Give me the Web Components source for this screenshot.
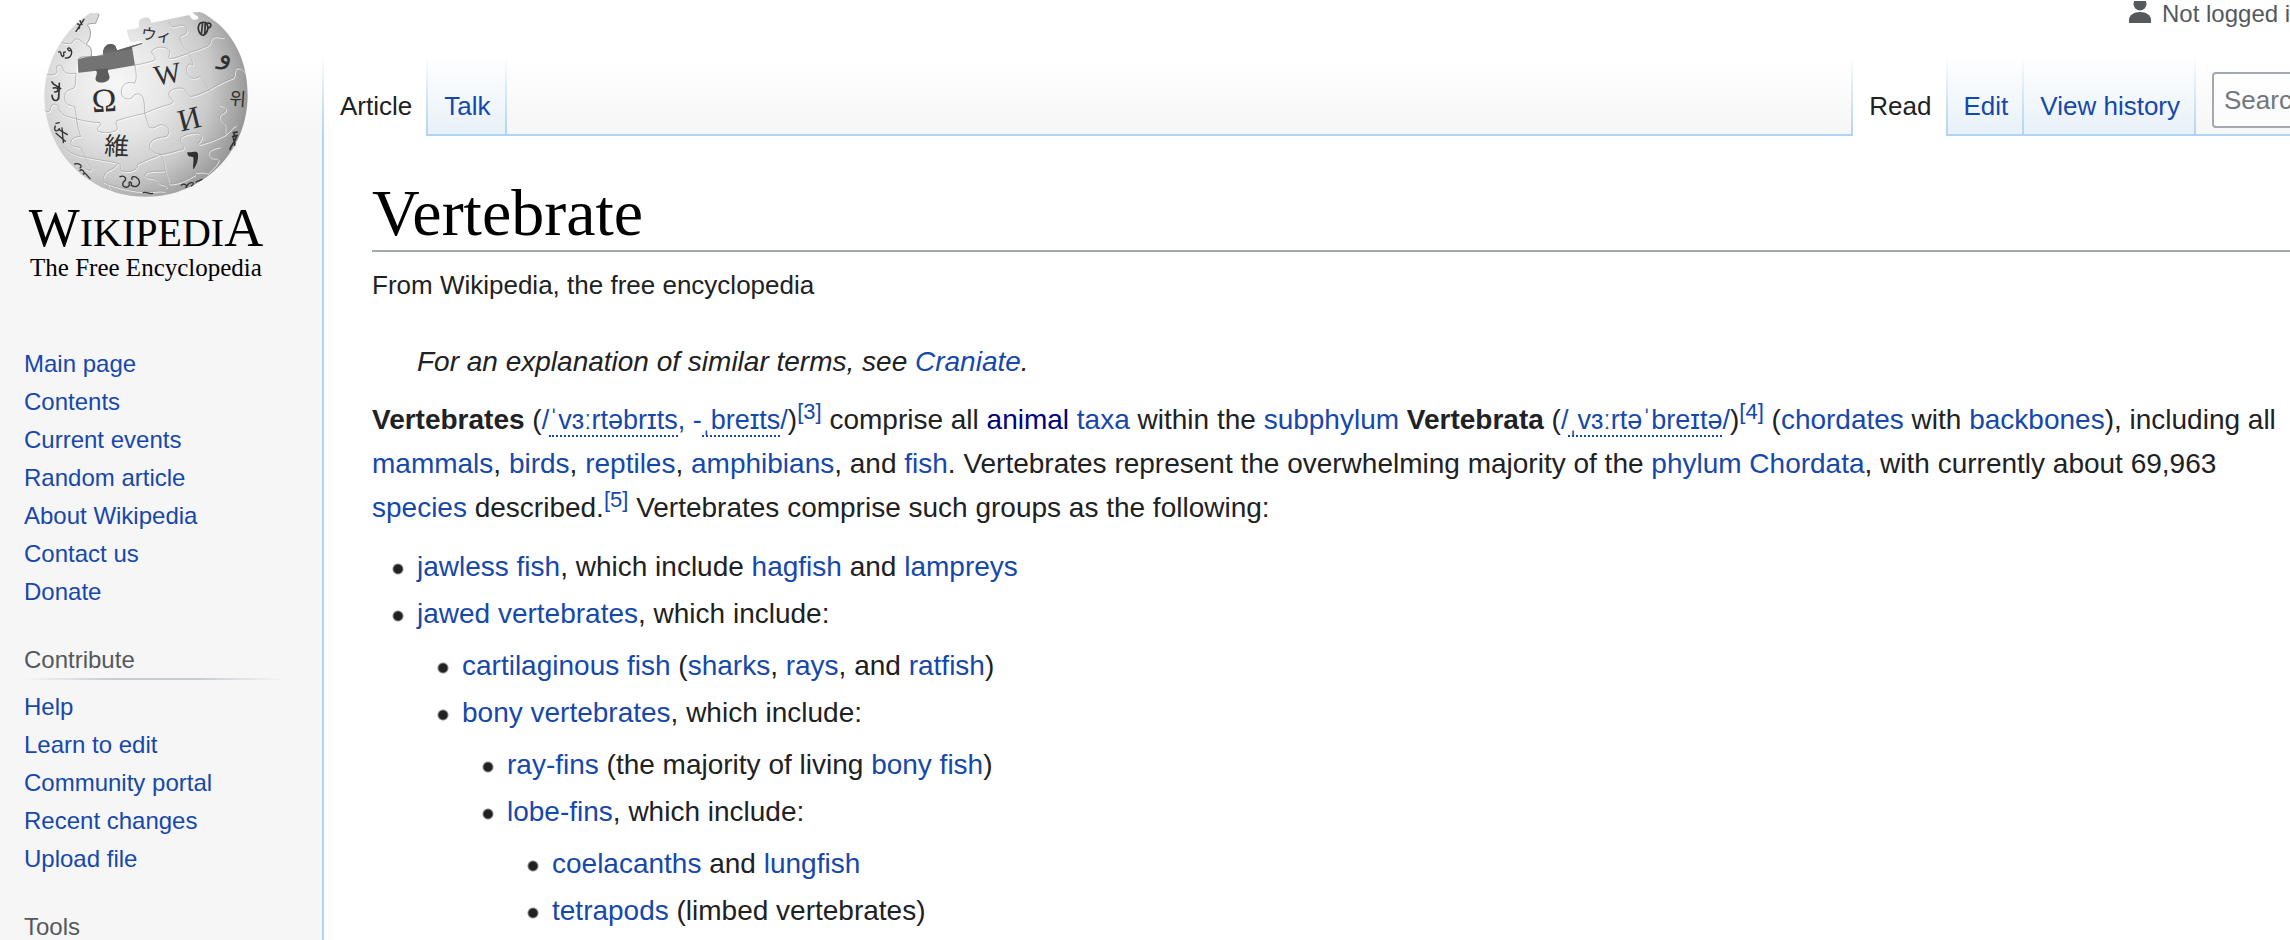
<!DOCTYPE html>
<html lang="en">
<head>
<meta charset="utf-8">
<title>Vertebrate - Wikipedia</title>
<style>
  html { --link: #1648ab; --line: #afd4f3; --muted: #54595d; }
  body {
    margin: 0;
    color: #202122;
    background: #f6f6f6;
    font-family: "Liberation Sans", Arial, sans-serif;
    overflow-x: hidden;
  }
</style>
</head>
<body>
<wiki-page>
  <wiki-sidebar slot="side">
    <wiki-logo></wiki-logo>
    <wiki-portal items="Main page|Contents|Current events|Random article|About Wikipedia|Contact us|Donate"></wiki-portal>
    <wiki-portal heading="Contribute" items="Help|Learn to edit|Community portal|Recent changes|Upload file"></wiki-portal>
    <wiki-portal heading="Tools" items=""></wiki-portal>
  </wiki-sidebar>
  <wiki-header slot="head"></wiki-header>
  <wiki-article heading="Vertebrate"></wiki-article>
</wiki-page>

<script>
class ShadowElement extends HTMLElement {
  constructor() {
    super();
    this.attachShadow({ mode: 'open' });
  }
  connectedCallback() {
    this.shadowRoot.innerHTML = this.render();
  }
}

customElements.define('wiki-page', class extends ShadowElement {
  render() {
    return `<style>
      :host {
        display: grid;
        grid-template-columns: 322px minmax(0, 1fr);
        min-height: 100vh;
        max-height: 100vh;
        overflow: hidden;
        background: linear-gradient(#fff 56px, #f6f6f6 136px);
      }
      main { display: flex; flex-direction: column; min-width: 0; }
    </style>
    <slot name="side"></slot>
    <main><slot name="head"></slot><slot></slot></main>`;
  }
});

customElements.define('wiki-sidebar', class extends ShadowElement {
  render() {
    return `<style>
      :host { display: flex; flex-direction: column; gap: 31px; min-width: 0; }
    </style><slot></slot>`;
  }
});

customElements.define('wiki-portal', class extends ShadowElement {
  render() {
    const heading = this.getAttribute('heading');
    const items = this.getAttribute('items').split('|').filter(Boolean);
    return `<style>
      :host { display: block; padding: 0 36px 0 24px; font-size: 24px; }
      h3 {
        margin: 0 0 8px;
        padding-bottom: 2px;
        font-size: 24px;
        font-weight: normal;
        line-height: 36px;
        color: var(--muted);
        background: linear-gradient(to right, rgba(200,204,209,0), #c8ccd1 33%, #c8ccd1 66%, rgba(200,204,209,0)) bottom / 100% 2px no-repeat;
      }
      ul { list-style: none; margin: 0; padding: 0; }
      li { line-height: 38px; }
      a { color: var(--link); text-decoration: none; }
      a:hover { text-decoration: underline; }
    </style>
    <nav>${heading ? `<h3>${heading}</h3>` : ''}
    <ul>${items.map(t => `<li><a href="#">${t}</a></li>`).join('')}</ul></nav>`;
  }
});

customElements.define('wiki-logo', class extends ShadowElement {
  render() {
    return `<style>
      :host { display: block; height: 314px; }
      a {
        display: flex;
        flex-direction: column;
        align-items: center;
        width: 292px;
        color: #000;
        text-decoration: none;
        font-family: "Liberation Serif", "Times New Roman", serif;
        white-space: nowrap;
      }
      svg { display: block; width: 292px; height: 200px; }
      .word { font-size: 54px; line-height: 56px; height: 54px; }
      .word span { font-size: 40px; }
      .tag { font-size: 25px; line-height: 28px; }
    </style>
    <a href="#">
      <svg viewBox="0 0 876 600" aria-hidden="true">
        <defs>
          <radialGradient id="ball" gradientUnits="userSpaceOnUse" cx="350" cy="250" r="430">
            <stop offset="0" stop-color="#f7f7f7"/>
            <stop offset=".35" stop-color="#e6e6e6"/>
            <stop offset=".65" stop-color="#cbcbcb"/>
            <stop offset=".9" stop-color="#9c9c9c"/>
            <stop offset="1" stop-color="#858585"/>
          </radialGradient>
          <linearGradient id="hole" x1="0" y1="0" x2="0" y2="1">
            <stop offset="0" stop-color="#555"/>
            <stop offset="1" stop-color="#777"/>
          </linearGradient>
          <g id="seams">
            <path d="M140 224 C158 226 176 224 170 208 C166 194 184 190 188 204 C192 222 208 222 228 220"/>
            <path d="M228 220 C226 240 228 256 222 264 C204 272 192 272 194 296 C196 318 216 316 224 320 C228 334 228 346 230 357"/>
            <path d="M134 330 C142 340 152 334 152 322 C156 308 174 310 176 322 C178 344 206 352 230 357"/>
            <path d="M230 357 C256 364 282 368 300 368 C308 378 286 382 294 392 C306 402 340 398 350 390 C356 380 344 372 350 362 C380 352 408 346 434 340"/>
            <path d="M405 195 C408 220 412 236 404 250 C392 246 368 244 364 272 C362 296 382 300 396 294 C404 276 424 278 430 296 C434 312 434 326 434 340"/>
            <path d="M405 195 C428 192 446 186 462 182 C476 172 446 160 458 150 C474 138 498 138 508 152 C514 164 500 170 508 176 C530 176 546 164 566 160"/>
            <path d="M508 66 C512 84 524 82 536 76 C552 72 564 84 560 98 C552 108 538 102 540 116 C546 138 556 148 566 156"/>
            <path d="M566 158 C600 148 612 142 622 138 C636 130 628 118 640 112 C656 106 662 116 672 112"/>
            <path d="M566 160 C574 176 580 188 578 196 C564 182 554 208 564 226 C574 240 590 236 600 228 C612 240 624 264 630 276"/>
            <path d="M434 340 C450 332 470 326 490 318 C512 314 532 306 510 294 C498 278 516 264 540 264 C560 264 554 280 572 290 C594 286 612 276 630 268 C660 250 680 240 700 234 C708 222 700 208 712 204 C724 202 730 214 736 218"/>
            <path d="M434 340 C440 358 444 372 448 382 C464 388 468 376 484 374 C504 376 512 392 502 408 C484 414 462 412 452 428 C440 444 458 462 480 462 C492 476 494 496 496 512"/>
            <path d="M630 276 C646 296 654 306 660 316 C676 318 684 326 672 338 C656 340 654 360 668 366 C680 372 674 390 676 400"/>
            <path d="M480 464 C506 462 528 452 548 448 C562 440 528 426 546 410 C568 398 606 394 606 410 C604 424 590 430 598 434 C636 424 660 412 676 404 C692 392 696 380 708 376"/>
            <path d="M230 357 C232 378 238 396 242 410 C222 408 208 420 214 434 C222 444 240 438 244 446 C250 458 254 466 258 476"/>
            <path d="M190 440 C204 456 222 466 258 472 C286 478 320 482 354 490 C370 496 352 512 372 514 C392 518 416 508 412 494 C430 482 460 474 480 464"/>
            <path d="M258 476 C264 494 284 506 270 512 C250 508 246 492 234 490"/>
            <path d="M354 490 C340 512 318 508 312 528 C306 540 326 548 330 572"/>
            <path d="M496 512 C470 516 438 510 434 526 C438 540 462 528 472 544 C482 560 498 548 500 564 M496 512 C500 530 506 536 508 552 C540 552 566 536 586 524"/>
            <path d="M660 440 C650 444 622 446 626 464 C638 484 650 466 656 480 C648 500 636 504 624 520 C608 512 596 520 586 516"/>
            <path d="M310 546 C350 564 400 574 440 576 C460 576 476 570 494 574"/>
            <path d="M186 128 C202 132 216 134 222 120 C232 108 246 128 256 132"/>
          </g>
        </defs>
        <path fill="#737373" d="M233 178 L262 170 L310 166 C306 146 318 131 334 132 C350 134 347 146 352 151 L428 128 L420 215 L235 222Z"/>
        <path fill="url(#hole)" d="M262 170 L310 166 C306 146 318 131 334 132 C350 134 347 146 352 151 L428 128 L398 146 L320 160 L268 174Z"/>
        <path fill="url(#ball)" d="M133 290 C134 200 178 98 272 38 C284 44 288 34 297 40 C297 52 290 56 287 70 C278 72 266 68 262 76 C278 90 272 116 258 134 C272 138 276 148 274 168 C256 174 240 166 233 180 L229 219 L290 212 C298 222 282 230 288 242 C298 252 322 248 328 236 C332 224 320 218 324 210 L405 196 L396 142 L428 131 C420 114 402 134 388 122 L380 90 L415 84 C420 76 412 60 424 56 C440 48 456 54 453 69 L568 45 C572 60 586 64 596 54 C594 46 576 42 578 37 C590 38 598 34 606 38 C624 46 640 60 656 72 C714 126 744 200 743 290 C740 460 606 590 438 590 C268 590 136 460 133 290Z"/>
        <path fill="#5c5c5c" d="M286 208 C298 222 282 230 288 242 C298 252 322 248 328 236 C332 224 320 218 324 206Z"/>
        <path fill="none" stroke="#9d9d9d" stroke-width="3" d="M297 42 C297 52 290 56 287 70 C278 72 266 68 262 76 C278 90 272 116 258 134 C272 138 276 148 274 168 C256 174 240 166 233 180"/>
        <use href="#seams" fill="none" stroke="#fff" stroke-opacity=".75" stroke-width="3" transform="translate(2 3)"/>
        <use href="#seams" fill="none" stroke="#a2a2a2" stroke-width="2"/>
        <g fill="#303030" font-family="Liberation Serif, serif" text-anchor="middle">
          <text x="312" y="335" font-size="100" transform="rotate(-4 312 300)">Ω</text>
          <text x="502" y="251" font-size="86" transform="rotate(-10 500 222)">W</text>
          <text x="568" y="388" font-size="94" transform="rotate(-14 568 358)">И</text>
          <text x="350" y="465" font-size="74" font-family="Noto Sans CJK JP, sans-serif" transform="rotate(3 350 440)">維</text>
          <text x="470" y="122" font-size="46" font-family="Noto Sans CJK JP, sans-serif" transform="rotate(8 470 100)">ウィ</text>
          <text x="676" y="192" font-size="84" font-family="DejaVu Sans, sans-serif" transform="rotate(14 676 178)">و</text>
          <text x="713" y="316" font-size="54" font-family="Noto Sans CJK KR, sans-serif" transform="rotate(4 715 296)">위</text>
        </g>
        <path fill="#303030" d="M562 456 C574 460 592 448 594 462 C596 478 590 494 581 508 C577 504 582 486 580 472 C574 468 562 474 562 456Z"/>
        <g fill="none" stroke="#333" stroke-width="4" stroke-linecap="round">
          <path d="M228 94 L252 58 M232 72 C238 70 242 82 236 86 M240 62 L246 74"/>
          <path d="M176 156 C186 152 180 168 188 170 C198 164 184 156 196 156 M196 174 C216 176 220 152 208 144 C200 142 202 154 212 152"/>
          <path d="M156 246 L160 252 L182 266 M160 264 C176 260 180 276 164 276 M156 286 C158 306 178 308 176 284 M178 250 L176 296" stroke-width="5"/>
          <path d="M168 370 L178 368 M166 378 C160 392 170 398 178 386 M168 400 L196 424 M186 384 L190 428 M176 388 L202 404"/>
          <path d="M224 492 C236 488 250 498 240 504 M240 512 C246 502 258 522 250 522 M256 520 L270 536"/>
          <path d="M360 530 C374 524 384 538 370 546 C362 562 382 566 388 556 C384 540 396 544 394 556 C410 566 426 552 414 536 C404 526 392 530 396 538"/>
          <path d="M430 578 C438 574 448 584 458 580 M544 556 C554 546 566 562 558 562 C570 540 590 548 574 558 M588 546 L606 538"/>
          <path d="M600 70 C590 82 596 104 610 106 C624 98 628 80 618 68 C606 64 602 70 600 70 M608 68 L604 104 M616 68 L614 104 M622 70 C634 66 636 80 626 84" stroke-width="5"/>
          <path d="M700 398 L712 396 M698 410 L712 406 M704 400 C694 424 708 424 704 436 M710 408 C706 428 692 436 690 448" stroke-width="5"/>
        </g>
      </svg>
      <div class="word">W<span>IKIPEDI</span>A</div>
      <div class="tag">The Free Encyclopedia</div>
    </a>`;
  }
});

customElements.define('wiki-tabs', class extends ShadowElement {
  render() {
    const names = this.getAttribute('items').split('|');
    return `<style>
      :host { display: block; --fade: linear-gradient(to bottom, rgba(175,212,243,0), var(--line)); }
      ul {
        display: flex;
        height: 80px;
        margin: 0;
        padding: 0 0 0 2px;
        list-style: none;
        background: var(--fade) left / 2px 100% no-repeat;
      }
      li { padding-right: 2px; background: var(--fade) right / 2px 100% no-repeat; }
      a {
        display: block;
        box-sizing: border-box;
        height: 78px;
        padding: 35px 14px 0 16px;
        font-size: 26px;
        line-height: 30px;
        white-space: nowrap;
        color: var(--link);
        text-decoration: none;
        background: linear-gradient(#fff, #e8f1f7);
      }
      a[aria-current] { height: 80px; color: #202122; background: #fff; }
    </style>
    <ul>${names.map((n, i) => `<li><a href="#"${i ? '' : ' aria-current="page"'}>${n}</a></li>`).join('')}</ul>`;
  }
});

customElements.define('wiki-header', class extends ShadowElement {
  render() {
    return `<style>
      :host { display: block; overflow: hidden; }
      .user {
        display: flex;
        justify-content: flex-end;
        box-sizing: border-box;
        height: 56px;
        padding-top: 1px;
        color: var(--muted);
        font-size: 24px;
        line-height: 26px;
      }
      .user div { display: flex; gap: 10px; width: 162px; white-space: nowrap; }
      svg { flex: none; width: 24px; height: 24px; }
      .bar {
        display: flex;
        height: 80px;
        background: linear-gradient(var(--line), var(--line)) bottom / 100% 2px no-repeat;
      }
      .gap { flex: 1; }
      form { flex: 0 0 78px; margin: 16px 0 0 16px; overflow: hidden; height: 56px; }
      input {
        box-sizing: border-box;
        width: 472px;
        height: 56px;
        padding: 0 10px;
        border: 2px solid #a2a9b1;
        border-radius: 4px;
        background: rgba(255,255,255,.5);
        font: 26px "Liberation Sans", Arial, sans-serif;
      }
      input::placeholder { color: #72777d; opacity: 1; }
    </style>
    <div class="user"><div>
      <svg viewBox="0 0 24 24" fill="#54595d" aria-hidden="true"><circle cx="12" cy="3" r="6.5"/><path d="M1 22v-3c0-5 5-8 11-8s11 3 11 8v3z"/></svg>
      <span>Not logged in</span>
    </div></div>
    <div class="bar">
      <wiki-tabs items="Article|Talk"></wiki-tabs>
      <div class="gap"></div>
      <wiki-tabs items="Read|Edit|View history"></wiki-tabs>
      <form role="search"><input type="search" aria-label="Search Wikipedia" placeholder="Search Wikipedia"></form>
    </div>`;
  }
});

customElements.define('wiki-article', class extends ShadowElement {
  render() {
    return `<style>
      :host {
        display: block;
        flex: 1;
        padding: 40px 0 0 48px;
        border-left: 2px solid var(--line);
        background: #fff;
        font-size: 28px;
        line-height: 44px;
      }
      h1 {
        margin: 0;
        border-bottom: 2px solid #a2a9b1;
        font: 66px/74px "Liberation Serif", Georgia, serif;
        color: #000;
      }
      .sub { margin-top: 18px; font-size: 26px; line-height: 30px; }
      .hat { margin: 40px 0 14px 45px; font-style: italic; }
      p { margin: 0 0 15px; }
      a { color: var(--link); text-decoration: none; }
      a:hover { text-decoration: underline; }
      a.visited { color: #00007f; }
      .ipa { font-size: 27px; }
      .ipa span { border-bottom: 2px dotted; }
      sup { font-size: 22px; line-height: 1px; }
      ul { margin: 0; padding: 0; list-style: none; }
      li {
        margin-bottom: 3px;
        padding-left: 45px;
        background: radial-gradient(circle at 26px 24px, #202122 4px, transparent 6px) no-repeat;
      }
      li ul { margin-top: 8px; }
    </style>
    <h1>${this.getAttribute('heading')}</h1>
    <div class="sub">From Wikipedia, the free encyclopedia</div>
    <div class="hat">For an explanation of similar terms, see <a href="#">Craniate</a>.</div>
    <p><b>Vertebrates</b> (<a class="ipa" href="#">/<span>ˈvɜːrtəbrɪts</span>, -<span>ˌbreɪts</span>/</a>)<sup><a href="#">[3]</a></sup> comprise all <a class="visited" href="#">animal</a> <a href="#">taxa</a> within the <a href="#">subphylum</a> <b>Vertebrata</b> (<a class="ipa" href="#">/<span>ˌvɜːrtəˈbreɪtə</span>/</a>)<sup><a href="#">[4]</a></sup> (<a href="#">chordates</a> with <a href="#">backbones</a>), including all <a href="#">mammals</a>, <a href="#">birds</a>, <a href="#">reptiles</a>, <a href="#">amphibians</a>, and <a href="#">fish</a>. Vertebrates represent the overwhelming majority of the <a href="#">phylum</a> <a href="#">Chordata</a>, with currently about 69,963 <a href="#">species</a> described.<sup><a href="#">[5]</a></sup> Vertebrates comprise such groups as the following:</p>
    <ul>
      <li><a href="#">jawless fish</a>, which include <a href="#">hagfish</a> and <a href="#">lampreys</a></li>
      <li><a href="#">jawed vertebrates</a>, which include:
        <ul>
          <li><a href="#">cartilaginous fish</a> (<a href="#">sharks</a>, <a href="#">rays</a>, and <a href="#">ratfish</a>)</li>
          <li><a href="#">bony vertebrates</a>, which include:
            <ul>
              <li><a href="#">ray-fins</a> (the majority of living <a href="#">bony fish</a>)</li>
              <li><a href="#">lobe-fins</a>, which include:
                <ul>
                  <li><a href="#">coelacanths</a> and <a href="#">lungfish</a></li>
                  <li><a href="#">tetrapods</a> (limbed vertebrates)</li>
                </ul>
              </li>
            </ul>
          </li>
        </ul>
      </li>
    </ul>`;
  }
});
</script>
</body>
</html>
